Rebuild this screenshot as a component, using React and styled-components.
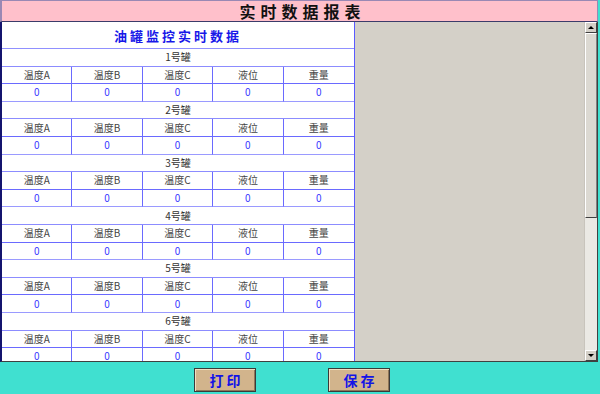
import styled, { createGlobalStyle } from 'styled-components';

const GlobalStyle = createGlobalStyle`
  body {
    margin: 0;
    font-family: 'Noto Sans CJK SC', 'Liberation Sans', sans-serif;
  }
`;

const tanks = ['1号罐', '2号罐', '3号罐', '4号罐', '5号罐', '6号罐'];
const fields = ['温度A', '温度B', '温度C', '液位', '重量'];

const App = () => {
  return (
    <>
      <GlobalStyle />
      <Page>
        <TitleBar>实时数据报表</TitleBar>

        <Frame>
          <TableArea>
            <Table>
              <Caption>油罐监控实时数据</Caption>
              {tanks.map(tank => (
                <TankBlock key={tank}>
                  <TankName>{tank}</TankName>
                  {fields.map(f => (
                    <HeadCell key={f}>{f}</HeadCell>
                  ))}
                  {fields.map(f => (
                    <ValueCell key={f}>0</ValueCell>
                  ))}
                </TankBlock>
              ))}
            </Table>
          </TableArea>

          <Blank />

          <ScrollBar>
            <ArrowBtn>
              <Arrow />
            </ArrowBtn>
            <Thumb />
            <Track />
            <ArrowBtn>
              <Arrow $down />
            </ArrowBtn>
          </ScrollBar>
        </Frame>

        <ButtonRow>
          <Button>打印</Button>
          <Button>保存</Button>
        </ButtonRow>
      </Page>
    </>
  );
};

export default App;

const Page = styled.div`
  width: 600px;
  height: 394px;
  box-sizing: border-box;
  padding-right: 2px;
  background: #40e0d0;
  display: flex;
  flex-direction: column;
  overflow: hidden;
`;

const TitleBar = styled.div`
  height: 22px;
  box-sizing: border-box;
  background: #ffc0cb;
  border: 1px solid #9a88b4;
  border-left-width: 2px;
  border-bottom: 1px solid #3b3b6a;
  display: flex;
  align-items: center;
  justify-content: center;
  padding-left: 6px;
  font-size: 16px;
  font-weight: 700;
  letter-spacing: 5px;
  color: #111;
`;

const Frame = styled.div`
  height: 340px;
  box-sizing: border-box;
  display: flex;
  background: #d4d0c8;
  border-left: 2px solid #14146e;
  border-right: 1px solid #404040;
  border-bottom: 1px solid #404040;
  overflow: hidden;
`;

const TableArea = styled.div`
  width: 353px;
  flex: none;
  overflow: hidden;
`;

const Table = styled.div`
  background: #fff;
  border-right: 1px solid #5a5aff;
`;

const Caption = styled.div`
  height: 27px;
  box-sizing: border-box;
  display: flex;
  align-items: center;
  justify-content: center;
  border-bottom: 1px solid #9090ff;
  color: #1818e8;
  font-size: 13px;
  font-weight: 700;
  letter-spacing: 3px;
`;

const TankBlock = styled.div`
  display: grid;
  grid-template-columns: repeat(5, 1fr);
  grid-auto-rows: 17.6px;
`;

const Cell = styled.div`
  box-sizing: border-box;
  display: flex;
  align-items: center;
  justify-content: center;
  border-bottom: 1px solid #6a6aff;
  border-right: 1px solid #6a6aff;
  font-size: 10px;
  line-height: 1;

  &:nth-child(5n + 1) {
    border-right: none;
  }
`;

const TankName = styled(Cell)`
  grid-column: 1 / -1;
  border-right: none;
  color: #333;
  border-bottom-color: #8c8cff;
`;

const HeadCell = styled(Cell)`
  color: #444;
`;

const ValueCell = styled(Cell)`
  color: #3a3aff;
  border-bottom-color: #9a9aff;
`;

const Blank = styled.div`
  flex: 1;
`;

const ScrollBar = styled.div`
  width: 12px;
  flex: none;
  display: flex;
  flex-direction: column;
  background: #ebe9e4;
  border-left: 1px solid #c8c4bc;
`;

const ArrowBtn = styled.div`
  height: 11px;
  flex: none;
  box-sizing: border-box;
  background: #d4d0c8;
  border: 1px solid;
  border-color: #fff #404040 #404040 #fff;
  display: flex;
  align-items: center;
  justify-content: center;
`;

const Arrow = styled.div`
  width: 0;
  height: 0;
  border-left: 3px solid transparent;
  border-right: 3px solid transparent;
  ${props =>
    props.$down
      ? 'border-top: 3px solid #000;'
      : 'border-bottom: 3px solid #000;'}
`;

const Thumb = styled.div`
  height: 185px;
  flex: none;
  box-sizing: border-box;
  background: #dcd9d2;
  border: 1px solid;
  border-color: #fff #808080 #404040 #fff;
`;

const Track = styled.div`
  flex: 1;
`;

const ButtonRow = styled.div`
  flex: 1;
  display: flex;
  align-items: center;
  gap: 72px;
  padding-left: 194px;
`;

const Button = styled.button`
  width: 62px;
  height: 24px;
  box-sizing: border-box;
  background: #d2b48c;
  border: 1px solid #3a3a3a;
  box-shadow: inset 1px 1px 0 #f2dfc2, inset -1px -1px 0 #8e7658;
  color: #1414e6;
  font-family: 'Noto Sans CJK SC', sans-serif;
  font-size: 14px;
  font-weight: 700;
  letter-spacing: 3px;
  padding: 0 0 0 3px;
  margin-top: 3px;
`;
